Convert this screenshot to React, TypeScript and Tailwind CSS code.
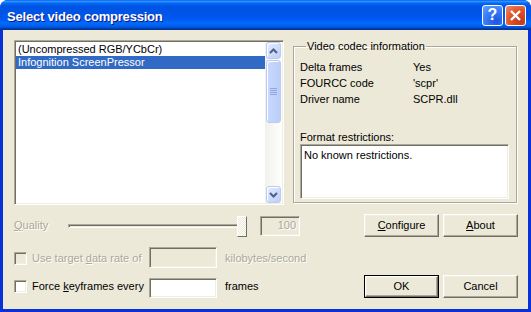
import React from 'react';

const sunken =
  'border border-t-[#ACA899] border-l-[#ACA899] border-b-white border-r-white shadow-[inset_1px_1px_0_#716F64,inset_-1px_-1px_0_#F1EFE2]';
const raised =
  'border border-t-white border-l-white border-r-[#716F64] border-b-[#716F64] shadow-[inset_-1px_-1px_0_#ACA899,inset_1px_1px_0_#F1EFE2] bg-[#ECE9D8]';
const disabledText = 'text-[#ACA899] [text-shadow:1px_1px_0_#fff]';

function Chevron({ up }: { up?: boolean }) {
  return (
    <svg width="9" height="6" viewBox="0 0 9 6">
      <polyline
        points={up ? '1,5 4.5,1.5 8,5' : '1,1 4.5,4.5 8,1'}
        fill="none"
        stroke="#4D6185"
        strokeWidth="2"
      />
    </svg>
  );
}

function ScrollButton({ up }: { up?: boolean }) {
  return (
    <div className="h-[17px] mx-[1px] rounded-[3px] border border-[#B9CBF3] bg-[linear-gradient(135deg,#E3EBFE,#BCCFF9)] shadow-[inset_1px_1px_0_#fff] flex items-center justify-center">
      <Chevron up={up} />
    </div>
  );
}

function Checkbox({ disabled }: { disabled?: boolean }) {
  return <div className={`w-[13px] h-[13px] shrink-0 ${sunken} ${disabled ? 'bg-[#ECE9D8]' : 'bg-white'}`} />;
}

function Button({ children, isDefault }: { children: React.ReactNode; isDefault?: boolean }) {
  if (isDefault) {
    return (
      <div className="w-[75px] h-[23px] border border-black">
        <div className={`w-full h-full ${raised} flex items-center justify-center`}>{children}</div>
      </div>
    );
  }
  return <div className={`w-[75px] h-[23px] ${raised} flex items-center justify-center`}>{children}</div>;
}

export default function App() {
  return (
    <div className="w-[531px] h-[312px] flex flex-col overflow-hidden rounded-t-[8px] bg-[#0831D9] text-[11px] text-black [font-family:'Liberation_Sans',Arial,sans-serif]">
      {/* title bar */}
      <div className="h-[30px] shrink-0 flex items-center pl-[7px] pr-[5px] bg-[linear-gradient(to_bottom,#0058EE_0%,#3593FF_4%,#288EFF_6%,#127DFF_8%,#036FFC_10%,#0262EE_14%,#0057E5_20%,#0054E3_24%,#0055EB_56%,#005BF5_66%,#026AFE_76%,#0062EF_86%,#0052D6_92%,#0040AB_94%,#003092_100%)]">
        <span className="text-white font-bold text-[13px] tracking-[-0.2px] [text-shadow:1px_1px_0_#0A1883] pt-[4px]">
          Select video compression
        </span>
        <div className="ml-auto flex gap-[2px]">
          <div className="w-[21px] h-[21px] rounded-[3px] border border-white bg-[radial-gradient(circle_at_70%_80%,#1E55E0,#3C80F8_60%,#6FA3FF)] flex items-center justify-center text-white font-bold text-[16px] leading-none">
            ?
          </div>
          <div className="w-[21px] h-[21px] rounded-[3px] border border-white bg-[radial-gradient(circle_at_80%_80%,#C23A1A,#E0562E_55%,#EF8C6C)] flex items-center justify-center">
            <svg width="13" height="13" viewBox="0 0 13 13">
              <path d="M2 2 L11 11 M11 2 L2 11" stroke="#fff" strokeWidth="2.4" />
            </svg>
          </div>
        </div>
      </div>

      {/* body */}
      <div className="flex-1 mx-[3px] mb-[3px] bg-[#ECE9D8] flex flex-col pl-[11px] pr-[10px] pt-[10px]">
        <div className="flex items-start">
          {/* list box */}
          <div className={`w-[270px] h-[165px] p-[1px] bg-white flex ${sunken}`}>
            <div className="flex-1 pt-[1px]">
              <div className="h-[13px] leading-[13px] pl-[2px]">(Uncompressed RGB/YCbCr)</div>
              <div className="h-[13px] leading-[13px] pl-[2px] bg-[#316AC5] text-white">Infognition ScreenPressor</div>
            </div>
            <div className="w-[17px] flex flex-col bg-[linear-gradient(to_right,#F3F1EC,#FEFEFB)]">
              <ScrollButton up />
              <div className="h-[63px] mt-[1px] mx-[1px] rounded-[3px] border border-[#B9CBF3] bg-[linear-gradient(to_right,#C9D8FC,#BBCEF8)] shadow-[inset_1px_1px_0_#fff] flex flex-col items-center justify-center gap-[1px]">
                <div className="w-[7px] h-[1px] bg-[#8DA8E5]" />
                <div className="w-[7px] h-[1px] bg-[#8DA8E5]" />
                <div className="w-[7px] h-[1px] bg-[#8DA8E5]" />
                <div className="w-[7px] h-[1px] bg-[#8DA8E5]" />
              </div>
              <div className="flex-1" />
              <ScrollButton />
            </div>
          </div>

          {/* group box */}
          <fieldset className="ml-[9px] w-[224px] h-[163px] border border-[#ACA899] shadow-[1px_1px_0_#fff,inset_1px_1px_0_#fff] pl-[6px]">
            <legend className="ml-[6px] px-[1px] leading-[12px]">Video codec information</legend>
            <div className="pt-[7px]">
              <div className="flex h-[16px] items-center">
                <span className="w-[113px]">Delta frames</span>
                <span>Yes</span>
              </div>
              <div className="flex h-[16px] items-center">
                <span className="w-[113px]">FOURCC code</span>
                <span>'scpr'</span>
              </div>
              <div className="flex h-[16px] items-center">
                <span className="w-[113px]">Driver name</span>
                <span>SCPR.dll</span>
              </div>
            </div>
            <div className="mt-[24px] h-[13px] leading-[13px]">Format restrictions:</div>
            <div className={`w-[209px] h-[55px] bg-white pl-[3px] pt-[2px] ${sunken}`}>No known restrictions.</div>
          </fieldset>
        </div>

        {/* quality row */}
        <div className="mt-[9px] h-[23px] flex items-center">
          <span className={`w-[54px] ${disabledText}`}>
            <span className="underline underline-offset-[1px]">Q</span>uality
          </span>
          <div className="relative w-[179px] h-[23px]">
            <div className="absolute left-0 top-[10px] w-[176px] h-[4px] border border-t-[#ACA899] border-l-[#ACA899] border-b-white border-r-white shadow-[inset_1px_1px_0_#716F64]" />
            <div className="absolute left-[169px] top-[2px] w-[10px] h-[21px] border border-t-white border-l-white border-r-[#716F64] border-b-[#716F64] bg-[repeating-conic-gradient(#fff_0_25%,#ECE9D8_0_50%)] bg-[length:2px_2px]" />
          </div>
          <div className={`ml-[13px] w-[40px] h-[20px] ${sunken} flex items-center justify-end pr-[3px] ${disabledText}`}>100</div>
          <div className="ml-auto flex gap-[4px]">
            <Button>
              <span className="underline underline-offset-[1px]">C</span>onfigure
            </Button>
            <Button>
              <span className="underline underline-offset-[1px]">A</span>bout
            </Button>
          </div>
        </div>

        {/* data rate row */}
        <div className="mt-[10px] h-[21px] flex items-center">
          <div className="w-[135px] flex items-center pt-[2px]">
            <Checkbox disabled />
            <span className={`ml-[5px] ${disabledText}`}>
              Use target <span className="underline underline-offset-[1px]">d</span>ata rate of
            </span>
          </div>
          <div className={`w-[68px] h-[21px] ${sunken}`} />
          <span className={`ml-[8px] pt-[2px] ${disabledText}`}>kilobytes/second</span>
        </div>

        {/* keyframes row */}
        <div className="mt-[7px] h-[23px] flex items-center">
          <div className="w-[135px] flex items-center">
            <Checkbox />
            <span className="ml-[5px]">
              Force <span className="underline underline-offset-[1px]">k</span>eyframes every
            </span>
          </div>
          <div className={`w-[68px] h-[20px] bg-white self-end ${sunken}`} />
          <span className="ml-[8px]">frames</span>
          <div className="ml-auto flex gap-[4px]">
            <Button isDefault>OK</Button>
            <Button>Cancel</Button>
          </div>
        </div>
      </div>
    </div>
  );
}
